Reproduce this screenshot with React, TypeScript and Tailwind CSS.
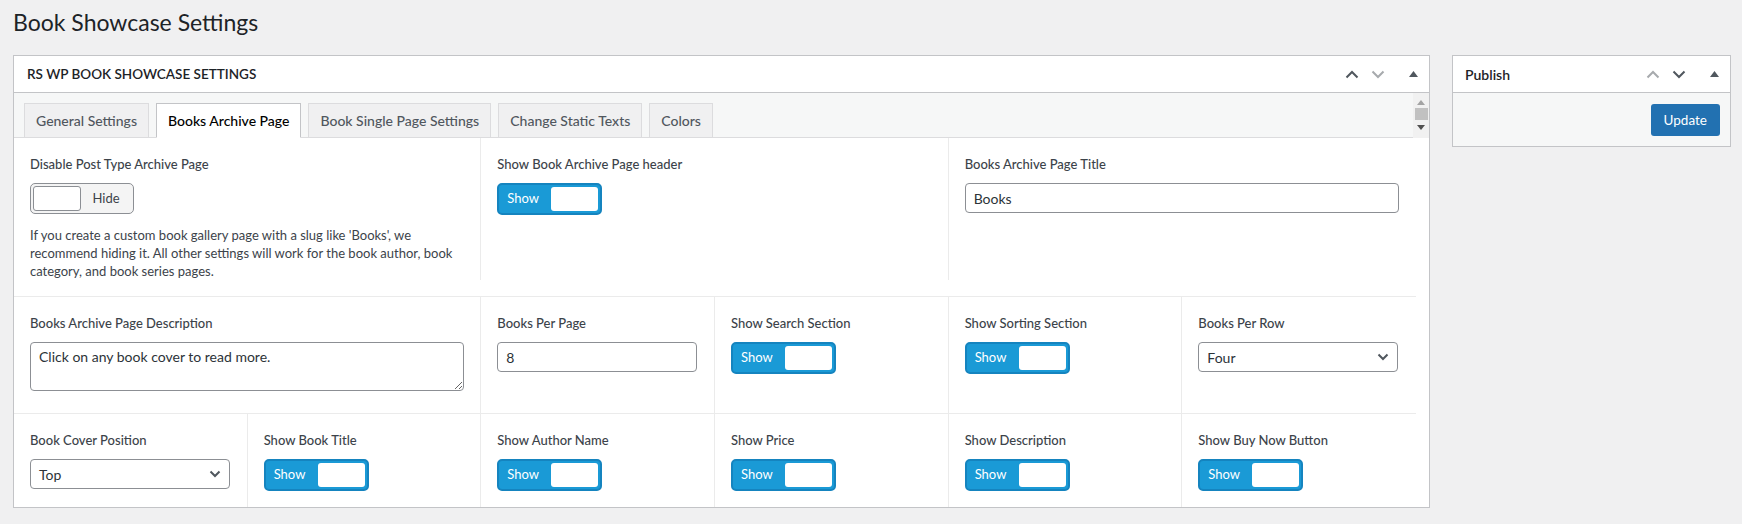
import React from "react";

const font = "font-['Lato','Liberation_Sans',sans-serif]";

const Label = ({ children }: { children: React.ReactNode }) => (
  <div className="text-[13px] font-medium leading-[18px] text-[#3c434a]">{children}</div>
);

const ShowToggle = () => (
  <div className="flex h-[32px] w-[105px] items-center rounded-[5px] border-2 border-[#1584bf] bg-[#1a9ad6] p-[2px] pl-[8px]">
    <span className="flex-1 text-[13px] text-white">Show</span>
    <span className="h-[24px] w-[47px] rounded-[3px] bg-white" />
  </div>
);

const HideToggle = () => (
  <div className="flex h-[31px] w-[104px] items-center rounded-[5px] border border-[#8c8f94] bg-[#f4f4f4] p-[2px]">
    <span className="h-[25px] w-[48px] rounded-[3px] border border-[#8c8f94] bg-white" />
    <span className="flex-1 text-center text-[13px] text-[#3c434a]">Hide</span>
  </div>
);

const TextInput = ({ value, w }: { value: string; w: string }) => (
  <div className={`flex h-[30px] items-center rounded-[4px] border border-[#8c8f94] bg-white px-[8px] text-[14px] text-[#2c3338] ${w}`}>
    {value}
  </div>
);

const Select = ({ value }: { value: string }) => (
  <div className="flex h-[30px] w-[200px] items-center justify-between rounded-[4px] border border-[#8c8f94] bg-white pl-[8px] pr-[8px] text-[14px] text-[#2c3338]">
    <span>{value}</span>
    <svg width="12" height="8" viewBox="0 0 12 8" fill="none">
      <path d="M1.5 1.5 6 6l4.5-4.5" stroke="#50575e" strokeWidth="2" />
    </svg>
  </div>
);

const Chevron = ({ dir, color }: { dir: "up" | "down"; color: string }) => (
  <svg width="14" height="9" viewBox="0 0 14 9" fill="none">
    <path d={dir === "up" ? "M1.5 7.5 7 2l5.5 5.5" : "M1.5 1.5 7 7l5.5-5.5"} stroke={color} strokeWidth="2" />
  </svg>
);

const Triangle = () => (
  <svg width="9" height="6" viewBox="0 0 9 6">
    <path d="M4.5 0 9 6H0z" fill="#50575e" />
  </svg>
);

const Cell = ({ children, className = "" }: { children: React.ReactNode; className?: string }) => (
  <div className={`flex flex-col gap-[10px] px-4 ${className}`}>{children}</div>
);

const tabs = ["General Settings", "Books Archive Page", "Book Single Page Settings", "Change Static Texts", "Colors"];

export default function App() {
  return (
    <div className={`h-screen w-full overflow-hidden bg-[#f0f0f1] ${font}`}>
      <h1 className="pl-[13px] pt-[5px] text-[23px] leading-[34px] text-[#1d2327]">Book Showcase Settings</h1>

      <div className="mt-[16px] flex items-start gap-[22px] pl-[13px]">
        {/* main settings box */}
        <div className="w-[1417px] border border-[#c3c4c7] bg-white">
          <div className="flex h-[37px] items-center justify-between border-b border-[#c3c4c7] pl-[13px] pr-[11px]">
            <h2 className="text-[13.5px] font-semibold text-[#1d2327]">RS WP BOOK SHOWCASE SETTINGS</h2>
            <div className="flex items-center gap-[12px]">
              <Chevron dir="up" color="#50575e" />
              <Chevron dir="down" color="#a7aaad" />
              <span className="ml-[12px]"><Triangle /></span>
            </div>
          </div>

          <div className="flex">
            <div className="flex h-[45px] flex-1 items-end gap-[7px] border-b border-[#dcdcde] bg-[#f6f7f7] pl-[10px]">
              {tabs.map((t, i) => (
                <div
                  key={t}
                  className={
                    i === 1
                      ? "-mb-px flex h-[35px] items-center border border-b-white border-[#c3c4c7] bg-white px-[11px] text-[14px] font-medium text-black"
                      : "-mb-px flex h-[35px] items-center border border-[#dcdcde] bg-[#f0f0f1] px-[11px] text-[14px] font-medium text-[#50575e]"
                  }
                >
                  {t}
                </div>
              ))}
            </div>
            <div className="flex h-[45px] w-[16px] flex-col items-center bg-[#f1f1f1] pt-[7px]">
              <svg width="8" height="5" viewBox="0 0 8 5"><path d="M4 0 8 5H0z" fill="#a3a3a3" /></svg>
              <div className="mt-[3px] h-[12px] w-[13px] bg-[#c1c1c1]" />
              <svg className="mt-[5px]" width="8" height="5" viewBox="0 0 8 5"><path d="M0 0h8L4 5z" fill="#505050" /></svg>
            </div>
          </div>

          <div className="w-[1402px]">
            {/* row 1 */}
            <div className="border-b border-[#ebebeb] pb-[24px]">
              <div className="grid h-[134px] grid-cols-3">
                <Cell className="border-r border-[#ebebeb] pt-[17px]">
                  <Label>Disable Post Type Archive Page</Label>
                  <HideToggle />
                  <p className="mt-[2px] text-[13px] leading-[18px] text-[#3c434a]">
                    If you create a custom book gallery page with a slug like 'Books', we recommend hiding it. All other settings will work for the book author, book category, and book series pages.
                  </p>
                </Cell>
                <Cell className="border-r border-[#ebebeb] pt-[17px]">
                  <Label>Show Book Archive Page header</Label>
                  <ShowToggle />
                </Cell>
                <Cell className="pt-[17px]">
                  <Label>Books Archive Page Title</Label>
                  <TextInput value="Books" w="w-[434px]" />
                </Cell>
              </div>
            </div>

            {/* row 2 */}
            <div className="grid grid-cols-6 border-b border-[#ebebeb]">
              <Cell className="col-span-2 border-r border-[#ebebeb] pb-[22px] pt-[17px]">
                <Label>Books Archive Page Description</Label>
                <textarea
                  readOnly
                  value="Click on any book cover to read more."
                  className="h-[49px] w-[434px] resize-y rounded-[4px] border border-[#8c8f94] px-[8px] py-[4px] text-[14px] leading-[20px] text-[#2c3338] outline-none"
                />
              </Cell>
              <Cell className="border-r border-[#ebebeb] pt-[17px]">
                <Label>Books Per Page</Label>
                <TextInput value="8" w="w-[200px]" />
              </Cell>
              <Cell className="border-r border-[#ebebeb] pt-[17px]">
                <Label>Show Search Section</Label>
                <ShowToggle />
              </Cell>
              <Cell className="border-r border-[#ebebeb] pt-[17px]">
                <Label>Show Sorting Section</Label>
                <ShowToggle />
              </Cell>
              <Cell className="pt-[17px]">
                <Label>Books Per Row</Label>
                <Select value="Four" />
              </Cell>
            </div>

            {/* row 3 */}
            <div className="grid grid-cols-6">
              <Cell className="border-r border-[#ebebeb] pb-[18px] pt-[17px]">
                <Label>Book Cover Position</Label>
                <Select value="Top" />
              </Cell>
              {["Show Book Title", "Show Author Name", "Show Price", "Show Description", "Show Buy Now Button"].map((l, i) => (
                <Cell key={l} className={`pt-[17px] ${i < 4 ? "border-r border-[#ebebeb]" : ""}`}>
                  <Label>{l}</Label>
                  <ShowToggle />
                </Cell>
              ))}
            </div>
          </div>
        </div>

        {/* publish box */}
        <div className="w-[279px] border border-[#c3c4c7] bg-[#f6f7f7]">
          <div className="flex h-[37px] items-center justify-between border-b border-[#c3c4c7] bg-white pl-[12px] pr-[11px]">
            <h2 className="text-[14px] font-semibold text-[#1d2327]">Publish</h2>
            <div className="flex items-center gap-[12px]">
              <Chevron dir="up" color="#a7aaad" />
              <Chevron dir="down" color="#50575e" />
              <span className="ml-[12px]"><Triangle /></span>
            </div>
          </div>
          <div className="flex justify-end px-[10px] pb-[10px] pt-[11px]">
            <button className="h-[32px] rounded-[3px] bg-[#2271b1] px-[13px] text-[13.5px] text-white">Update</button>
          </div>
        </div>
      </div>
    </div>
  );
}
